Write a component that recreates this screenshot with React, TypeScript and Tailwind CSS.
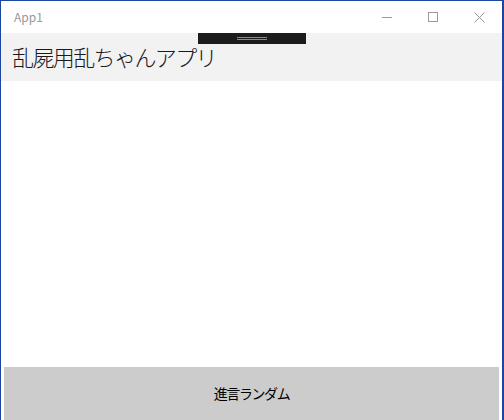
const font = { fontFamily: '"Noto Sans CJK JP", "Noto Sans", sans-serif' };

const TitleBar: React.FC = () => {
  return (
    <div className="flex h-8 items-center bg-white">
      <span className="pl-[13px] text-[12px] text-[#999999] flex-1" style={font}>
        App1
      </span>
      <div className="flex h-full">
        <div className="flex w-[46px] items-center justify-center">
          <div className="h-px w-[10px] bg-[#999999]" />
        </div>
        <div className="flex w-[46px] items-center justify-center">
          <div className="h-[10px] w-[10px] border border-[#999999]" />
        </div>
        <div className="flex w-[46px] items-center justify-center">
          <svg width="11" height="11" viewBox="0 0 11 11">
            <path d="M0.5 0.5L10.5 10.5M10.5 0.5L0.5 10.5" stroke="#999999" strokeWidth="1" />
          </svg>
        </div>
      </div>
    </div>
  );
}

export default function App() {
  return (
    <div className="h-[420px] w-[504px] overflow-hidden bg-[#1a47a0] pt-px pl-px pr-[2px]">
      <div className="relative flex h-full flex-col bg-white">
        <TitleBar />
        <div className="flex h-12 items-start bg-[#f2f2f2]">
          <h1
            className="pl-[11px] pt-[9px] text-[22px] font-light leading-[28px] tracking-[-1.6px] text-[#1a1a1a]"
            style={font}
          >
            乱屍用乱ちゃんアプリ
          </h1>
        </div>
        <div className="absolute left-[197px] top-8 flex h-[11px] w-[108px] items-center justify-center bg-[#1c1c1c]">
          <div className="flex w-[30px] flex-col gap-px">
            <div className="h-px bg-[#8a8a8a]" />
            <div className="h-px bg-[#8a8a8a]" />
          </div>
        </div>
        <div className="flex-1" />
        <div className="flex px-[3px]">
          <button
            className="flex h-[53px] flex-1 items-center justify-center bg-[#cccccc] text-[14px] tracking-[-1.4px] text-black"
            style={font}
          >
            進言ランダム
          </button>
        </div>
      </div>
    </div>
  );
}
